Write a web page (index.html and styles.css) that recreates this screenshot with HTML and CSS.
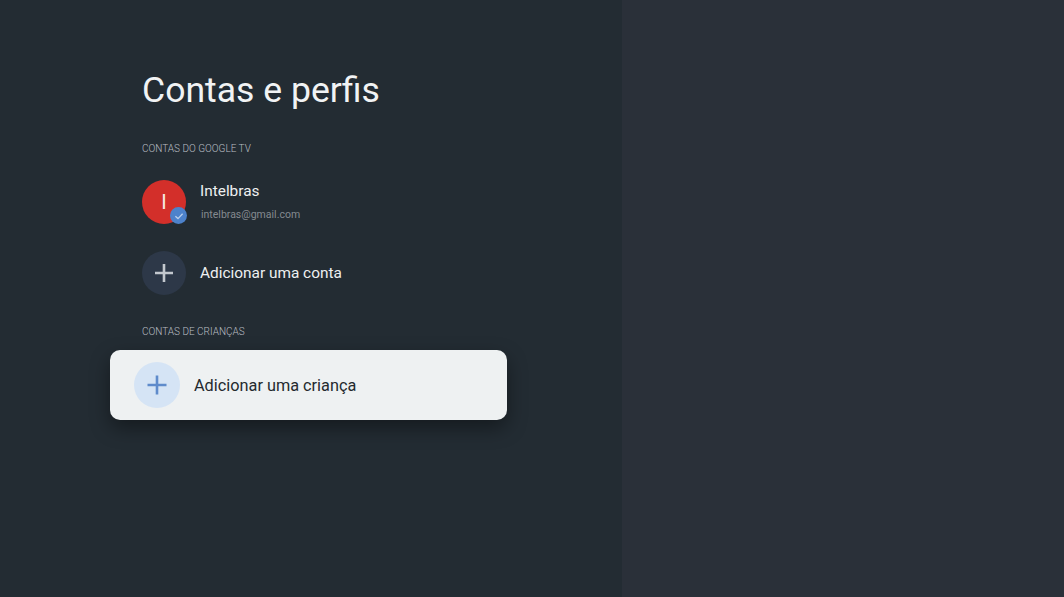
FILE: index.html
```html
<!DOCTYPE html>
<html lang="pt-BR">
<head>
  <meta charset="UTF-8">
  <title>Contas e perfis</title>
  <link rel="stylesheet" href="styles.css">
</head>
<body>
  <div class="screen">
    <main class="panel">
      <h1 class="title">Contas e perfis</h1>

      <h2 class="section-label">CONTAS DO GOOGLE TV</h2>
      <div class="row account-row">
        <div class="avatar">
          <span class="avatar-letter">I</span>
          <span class="badge">
            <svg viewBox="0 0 16 16" width="16" height="16">
              <path d="M4.4 8.2 7 10.6 11.6 5.8" fill="none" stroke="#b9cfee" stroke-width="1.3"/>
            </svg>
          </span>
        </div>
        <div class="account-text">
          <div class="row-title">Intelbras</div>
          <div class="row-sub">intelbras@gmail.com</div>
        </div>
      </div>

      <div class="row add-row">
        <div class="circle">
          <svg viewBox="0 0 20 20" width="20" height="20">
            <path d="M10 1v18M1 10h18" fill="none" stroke="#c3c8ce" stroke-width="2.6"/>
          </svg>
        </div>
        <div class="row-title">Adicionar uma conta</div>
      </div>

      <h2 class="section-label kids-label">CONTAS DE CRIANÇAS</h2>
      <div class="card">
        <div class="card-circle">
          <svg viewBox="0 0 20 20" width="20" height="20">
            <path d="M10 .5v19M.5 10h19" fill="none" stroke="#5f8bcb" stroke-width="2.6"/>
          </svg>
        </div>
        <div class="card-title">Adicionar uma criança</div>
      </div>
    </main>
    <aside class="side"></aside>
  </div>
</body>
</html>
```

FILE: styles.css
```css
* {
  margin: 0;
  padding: 0;
  box-sizing: border-box;
}

body {
  font-family: Roboto, sans-serif;
  background: #2a3039;
  overflow: hidden;
}

.screen {
  display: flex;
  width: 1064px;
  height: 597px;
}

.panel {
  width: 622px;
  background: #232c33;
  padding: 68px 0 0 142px;
}

.side {
  flex: 1;
  background: #2a3039;
}

.title {
  font-size: 35.6px;
  font-weight: 400;
  line-height: 44px;
  color: #f1f3f4;
}

.section-label {
  font-size: 10px;
  font-weight: 300;
  line-height: 14px;
  color: #b9bec3;
  margin-top: 30px;
}

.row {
  display: flex;
  align-items: center;
}

.account-row {
  margin-top: 24px;
  height: 44px;
}

.avatar {
  position: relative;
  width: 44px;
  height: 44px;
  border-radius: 50%;
  background: #d32f2a;
  display: flex;
  align-items: center;
  justify-content: center;
  flex-shrink: 0;
}

.avatar-letter {
  font-size: 20px;
  color: #f7ece4;
}

.badge {
  position: absolute;
  right: -1px;
  bottom: 0;
  width: 17px;
  height: 17px;
  border-radius: 50%;
  background: #4d82cb;
  display: flex;
  align-items: center;
  justify-content: center;
}

.account-text {
  margin: 0 0 1px 14px;
}

.row-title {
  font-size: 15.4px;
  line-height: 20px;
  color: #eef0f1;
}

.row-sub {
  font-size: 10.5px;
  line-height: 14px;
  color: #858a90;
  margin: 7px 0 0 1px;
}

.add-row {
  margin-top: 27px;
  height: 44px;
}

.add-row .row-title {
  margin-left: 14px;
}

.circle {
  width: 44px;
  height: 44px;
  border-radius: 50%;
  background: #2d3848;
  display: flex;
  align-items: center;
  justify-content: center;
}

.kids-label {
  margin-top: 30px;
}

.card {
  display: flex;
  align-items: center;
  width: 397px;
  height: 70px;
  margin: 11px 0 0 -32px;
  padding-left: 24px;
  border-radius: 10px;
  background: #eef1f2;
  box-shadow: 0 8px 20px rgba(0, 0, 0, 0.4);
}

.card-circle {
  width: 46px;
  height: 46px;
  border-radius: 50%;
  background: #d5e4f5;
  display: flex;
  align-items: center;
  justify-content: center;
}

.card-title {
  margin: 1px 0 0 14px;
  font-size: 16.3px;
  line-height: 20px;
  color: #24292e;
}
```
